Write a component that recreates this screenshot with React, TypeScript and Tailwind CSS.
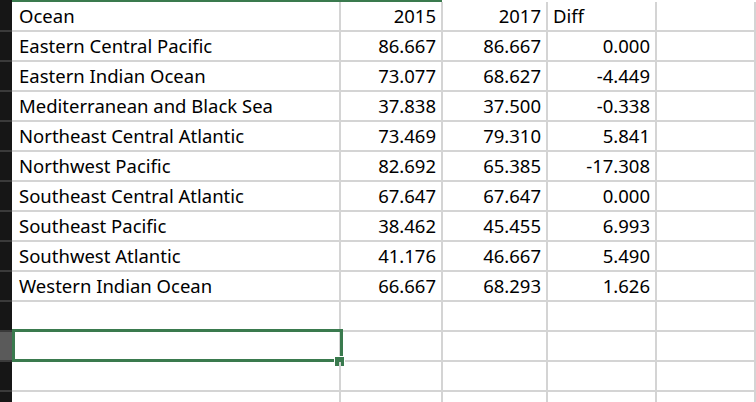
import React from 'react';

const ROWS: [string, string, string, string][] = [
  ['Ocean', '2015', '2017', 'Diff'],
  ['Eastern Central Pacific', '86.667', '86.667', '0.000'],
  ['Eastern Indian Ocean', '73.077', '68.627', '-4.449'],
  ['Mediterranean and Black Sea', '37.838', '37.500', '-0.338'],
  ['Northeast Central Atlantic', '73.469', '79.310', '5.841'],
  ['Northwest Pacific', '82.692', '65.385', '-17.308'],
  ['Southeast Central Atlantic', '67.647', '67.647', '0.000'],
  ['Southeast Pacific', '38.462', '45.455', '6.993'],
  ['Southwest Atlantic', '41.176', '46.667', '5.490'],
  ['Western Indian Ocean', '66.667', '68.293', '1.626'],
  ['', '', '', ''],
  ['', '', '', ''],
  ['', '', '', ''],
  ['', '', '', ''],
];

export default function App() {
  return (
    <div className="w-[756px] h-[402px] overflow-hidden bg-white font-['Liberation_Sans',_sans-serif] text-[18.5px] text-black relative pt-[2px]">
      <div className="absolute left-[12px] top-0 w-[430px] h-[2px] bg-[#3a7a4e]" />
      <div className="absolute left-0 top-0 w-[12px] h-[2px] bg-[#161616]" />
      {ROWS.map((r, i) => {
        const selected = i === 11;
        return (
          <div key={i} className="flex h-[30px]">
            <div className={`w-[12px] shrink-0 border-b-2 border-[#3a3a3a] ${selected ? 'bg-[#5a5a5a]' : 'bg-[#161616]'}`} />
            <div className="w-[329px] shrink-0 border-b-2 border-r-2 border-[#d4d4d4] pl-[7px] flex items-center relative">
              {r[0]}
              {selected && (
                <>
                  <div className="absolute left-0 top-[-3px] w-[331px] h-[33px] border-[3px] border-[#3a7a4e]" />
                  <div className="absolute right-[-6px] bottom-[-7px] w-[11px] h-[11px] bg-[#3a7a4e] border border-white" />
                </>
              )}
            </div>
            <div className="w-[102px] shrink-0 border-b-2 border-r-2 border-[#d4d4d4] pr-[5px] flex items-center justify-end">{r[1]}</div>
            <div className="w-[105px] shrink-0 border-b-2 border-r-2 border-[#d4d4d4] pr-[5px] flex items-center justify-end">{r[2]}</div>
            <div className={`w-[109px] shrink-0 border-b-2 border-r-2 border-[#d4d4d4] flex items-center ${i === 0 ? 'pl-[5px]' : 'pr-[5px] justify-end'}`}>{r[3]}</div>
            <div className="flex-1 border-b-2 border-r-2 border-[#d4d4d4]" />
          </div>
        );
      })}
    </div>
  );
}
